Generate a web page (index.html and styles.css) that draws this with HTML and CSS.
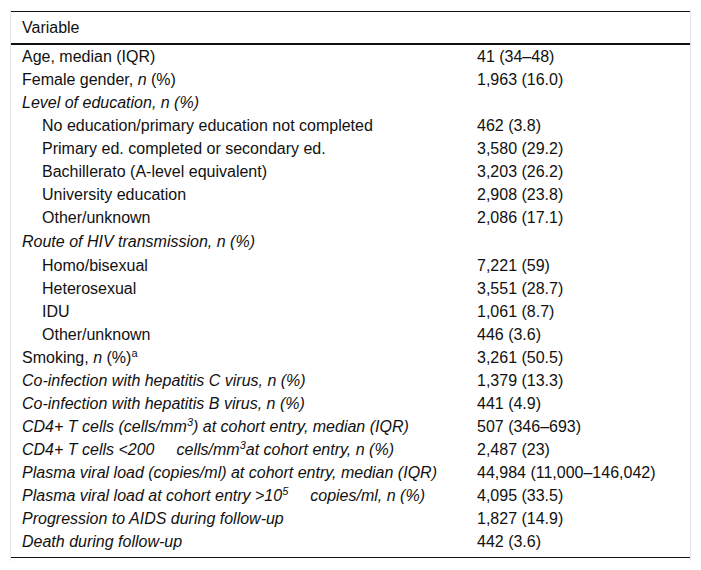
FILE: index.html
```html
<!DOCTYPE html>
<html>
<head>
<meta charset="utf-8">
<link rel="stylesheet" href="styles.css">
</head>
<body>
<div class="wrap">
<table class="tbl">
<colgroup><col class="c1"><col class="c2"></colgroup>
<thead>
<tr><th>Variable</th><th></th></tr>
</thead>
<tbody>
<tr><td>Age, median (IQR)</td><td>41 (34–48)</td></tr>
<tr><td>Female gender, <i>n</i> (%)</td><td>1,963 (16.0)</td></tr>
<tr><td><i>Level of education, n (%)</i></td><td></td></tr>
<tr><td class="ind">No education/primary education not completed</td><td>462 (3.8)</td></tr>
<tr><td class="ind">Primary ed. completed or secondary ed.</td><td>3,580 (29.2)</td></tr>
<tr><td class="ind">Bachillerato (A-level equivalent)</td><td>3,203 (26.2)</td></tr>
<tr><td class="ind">University education</td><td>2,908 (23.8)</td></tr>
<tr><td class="ind">Other/unknown</td><td>2,086 (17.1)</td></tr>
<tr class="grp"><td><i>Route of HIV transmission, n (%)</i></td><td></td></tr>
<tr><td class="ind">Homo/bisexual</td><td>7,221 (59)</td></tr>
<tr><td class="ind">Heterosexual</td><td>3,551 (28.7)</td></tr>
<tr><td class="ind">IDU</td><td>1,061 (8.7)</td></tr>
<tr><td class="ind">Other/unknown</td><td>446 (3.6)</td></tr>
<tr><td>Smoking, <i>n</i> (%)<sup>a</sup></td><td>3,261 (50.5)</td></tr>
<tr><td><i>Co-infection with hepatitis C virus, n (%)</i></td><td>1,379 (13.3)</td></tr>
<tr><td><i>Co-infection with hepatitis B virus, n (%)</i></td><td>441 (4.9)</td></tr>
<tr><td><i>CD4+ T cells (cells/mm<sup>3</sup>) at cohort entry, median (IQR)</i></td><td>507 (346–693)</td></tr>
<tr><td><i>CD4+ T cells &lt;200<span class="gap"></span>cells/mm<sup>3</sup>at cohort entry, n (%)</i></td><td>2,487 (23)</td></tr>
<tr><td><i>Plasma viral load (copies/ml) at cohort entry, median (IQR)</i></td><td>44,984 (11,000–146,042)</td></tr>
<tr><td><i>Plasma viral load at cohort entry &gt;10<sup>5</sup><span class="gap"></span>copies/ml, n (%)</i></td><td>4,095 (33.5)</td></tr>
<tr><td><i>Progression to AIDS during follow-up</i></td><td>1,827 (14.9)</td></tr>
<tr class="last"><td><i>Death during follow-up</i></td><td>442 (3.6)</td></tr>
</tbody>
</table>
</div>
</body>
</html>
```
FILE: styles.css
```css
html, body {
  margin: 0;
  padding: 0;
  background: #fff;
}
body {
  font-family: "Liberation Sans", Arial, sans-serif;
  font-size: 16px;
  color: #111;
}
.wrap {
  margin: 10px 10px 0 10px;
  padding: 1px 0 3px 0;
  border-left: 1px solid #e6e6e6;
  border-right: 1px solid #e6e6e6;
}
.tbl {
  width: 100%;
  border-collapse: collapse;
  table-layout: fixed;
}
.c1 { width: 455px; }
.tbl th {
  text-align: left;
  font-weight: normal;
  height: 31px;
  padding: 0 11px;
  line-height: 18px;
  border-top: 1px solid #111;
  border-bottom: 2px solid #111;
  vertical-align: middle;
}
.tbl td {
  height: 23px;
  padding: 0 11px;
  line-height: 18px;
  vertical-align: middle;
  white-space: nowrap;
}
.tbl tr.last td {
  border-bottom: 1px solid #111;
  height: 23px;
  padding-bottom: 4px;
}
.tbl tr.grp td { height: 25px; }
.tbl td.ind { padding-left: 31px; }
sup {
  font-size: 11px;
  line-height: 0;
  vertical-align: 6px;
}
.gap {
  display: inline-block;
  width: 22px;
}
```
